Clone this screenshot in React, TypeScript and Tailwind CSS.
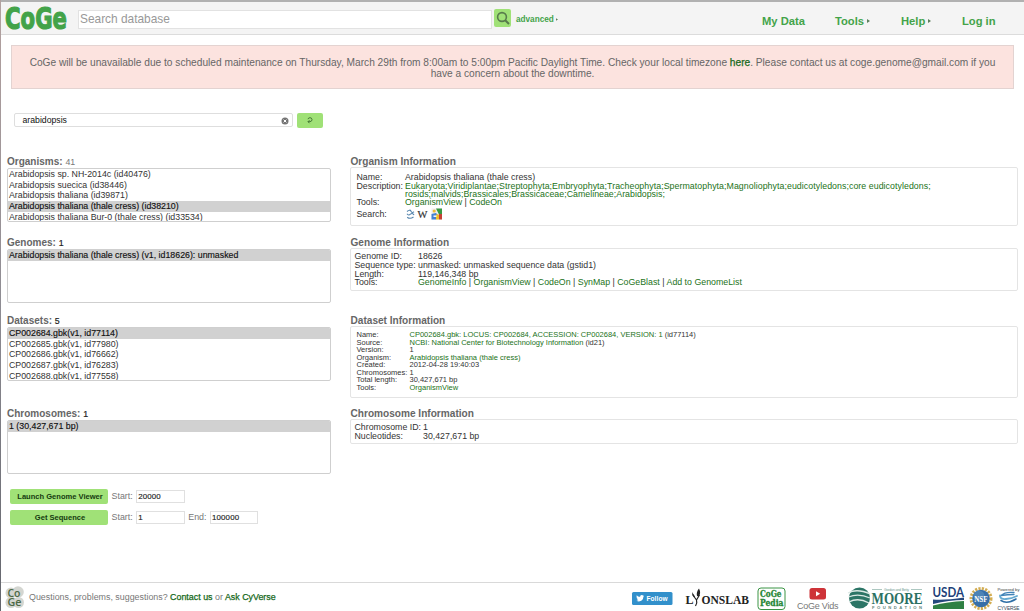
import React, { FC, ReactNode } from "react";

const SELECT_BOX =
  "h-[54px] w-[324px] overflow-hidden rounded-[2px] border border-[#cfcfcf] bg-white text-[8.8px] leading-[10.7px] text-[#333]";

const A: FC<{ children: ReactNode; strong?: boolean }> = ({ children, strong }) => (
  <a href="#" className={strong ? "text-[#16691a] [-webkit-text-stroke:0.25px]" : "text-[#1b7220]"}>
    {children}
  </a>
);

const SelectList: FC<{ label: string; count: string; items: string[]; selected: number; muted?: boolean }> = ({
  label,
  count,
  items,
  selected,
  muted,
}) => (
  <div className="w-[343px] shrink-0">
    <h3 className="h-3 text-[10px] leading-3 font-bold text-[#666]">
      {label}:{" "}
      <span className={muted ? "text-[8.8px] font-normal text-[#777]" : "text-[8.8px] font-normal text-[#222] [-webkit-text-stroke:0.2px]"}>
        {count}
      </span>
    </h3>
    <ul className={SELECT_BOX}>
      {items.map((item, i) => (
        <li
          key={item}
          className={
            i === selected ? "bg-[#d1d1d1] pl-px text-[#111] [-webkit-text-stroke:0.15px]" : "pl-px"
          }
        >
          {item}
        </li>
      ))}
    </ul>
  </div>
);

const InfoPanel: FC<{ title: string; box: string; children: ReactNode }> = ({ title, box, children }) => (
  <div className="flex-1">
    <h3 className="h-3 pl-[0.5px] text-[10.1px] leading-3 font-bold text-[#666]">{title}</h3>
    <div className={`rounded-[2px] border border-[#e4e4e4] text-[#333] ${box}`}>{children}</div>
  </div>
);

const Row: FC<{ name: string; width: string; children: ReactNode }> = ({ name, width, children }) => (
  <div className="flex whitespace-nowrap">
    <div className={`shrink-0 ${width}`}>{name}:</div>
    <div>{children}</div>
  </div>
);

const Arrow: FC<{ className: string }> = ({ className }) => (
  <svg viewBox="0 0 3 4" className={className}>
    <path d="M0 0L3 2L0 4z" fill="#5d805d" />
  </svg>
);

const lineage1 =
  "Eukaryota;Viridiplantae;Streptophyta;Embryophyta;Tracheophyta;Spermatophyta;Magnoliophyta;eudicotyledons;core eudicotyledons;";
const lineage2 = "rosids;malvids;Brassicales;Brassicaceae;Camelineae;Arabidopsis;";

const Header = () => (
  <header className="flex h-[35px] items-start border-t-2 border-b border-t-[#b1b1b1] border-b-[#dcdcdc] bg-[#f4f4f4]">
    <svg width="78" height="32" viewBox="0 2 78 32" className="shrink-0 overflow-visible">
      <text
        x="5"
        y="28.5"
        fontFamily="DejaVu Sans, sans-serif"
        fontWeight="700"
        fontSize="31"
        textLength="62"
        lengthAdjust="spacingAndGlyphs"
        fill="#43a349"
        stroke="#43a349"
        strokeWidth="1.2"
      >
        CoGe
      </text>
    </svg>
    <div className="mt-2 flex h-[19px] w-[414px] items-center border border-[#e2e2e2] bg-white pl-px text-[11.9px] text-[#999]">
      Search database
    </div>
    <div className="mt-[7px] ml-[2px] flex h-[18px] w-[17px] items-center justify-center rounded-[2px] bg-[#a0e177]">
      <svg width="14" height="14" viewBox="0 0 14 14" fill="none" stroke="#587b4c">
        <circle cx="6" cy="6" r="4.4" strokeWidth="1.6" />
        <path d="M9.2 9.2L13 13" strokeWidth="2" />
      </svg>
    </div>
    <div className="mt-3 ml-[5px] flex items-center text-[8.2px] leading-[11px] font-bold text-[#43a349]">
      advanced
      <Arrow className="ml-[2px] h-[3px] w-[2px]" />
    </div>
    <nav className="mt-3 mr-7 ml-auto flex text-[11.2px] leading-[14px] font-bold text-[#43a349]">
      <span className="w-[73px]">My Data</span>
      <span className="flex w-[66px] items-center">
        Tools
        <Arrow className="ml-[3px] h-1 w-[3px]" />
      </span>
      <span className="flex w-[61px] items-center">
        Help
        <Arrow className="ml-[3px] h-1 w-[3px]" />
      </span>
      <span className="w-[34px] whitespace-nowrap">Log in</span>
    </nav>
  </header>
);

const SearchIcons = () => (
  <svg width="38" height="13" viewBox="0 0 38 13" className="mt-px">
    <g fill="none" stroke="#5585ad" strokeWidth="1.1">
      <path d="M2 3.5Q5 1 6 3.2T9 3.8" />
      <path d="M2 5.8Q3.5 8 5.4 6.2T9 7" />
      <path d="M2.2 9.2Q5 11.5 8.5 9" />
    </g>
    <text x="12.5" y="10.3" fontFamily="Liberation Serif, serif" fontSize="10.5" fill="#333" stroke="#333" strokeWidth=".2">
      W
    </text>
    <rect x="26.5" y="0.5" width="10.5" height="11" fill="#eee" />
    <path d="M31 .5h6v6h-3z" fill="#389a42" />
    <path d="M26.500 6l4.500-1 3 3-3 3.500h-4.500z" fill="#4581d1" />
    <path d="M31 6.500h3v5h-3z" fill="#f1bd27" />
    <path d="M34 6h3v5.500h-3z" fill="#c64035" />
    <circle cx="29.200" cy="3" r="1.600" fill="#edbc37" />
    <path d="M28.500 7.500h3v1.400h-3z" fill="#fff" />
  </svg>
);

const GreenButton: FC<{ children: ReactNode }> = ({ children }) => (
  <button className="h-[15px] w-[98px] rounded-[2px] bg-[#a0e177] pl-[2px] text-[7.55px] leading-[15px] font-bold whitespace-nowrap text-[#153a10]">
    {children}
  </button>
);

const Field: FC<{ label: string; value: string; gap: string }> = ({ label, value, gap }) => (
  <div className={`flex items-center text-[8.9px] text-[#777] ${gap}`}>
    {label}:
    <span className="ml-[3.5px] flex h-[13px] w-[48.5px] items-center border border-[#e0e0e0] pl-px text-[7.9px] tracking-[0.15px] text-[#222] [-webkit-text-stroke:0.15px]">
      {value}
    </span>
  </div>
);

const Footer = () => (
  <footer className="flex h-[29px] items-start border-t border-[#d9d9d9] bg-white">
    <svg width="29" height="28" viewBox="0 583 29 28" className="shrink-0">
      <g fill="#d4d6d1">
        <circle cx="11" cy="593" r="5.5" />
        <circle cx="18" cy="592" r="5.8" />
        <circle cx="11" cy="602.5" r="5.5" />
        <circle cx="18.5" cy="602.5" r="5.5" />
      </g>
      <g fontFamily="Open Sans, sans-serif" fontWeight="600" fontSize="10" fill="#4c6946">
        <text x="7.5" y="596.5" textLength="13" lengthAdjust="spacingAndGlyphs">Co</text>
        <text x="7.5" y="606.2" textLength="14" lengthAdjust="spacingAndGlyphs">Ge</text>
      </g>
    </svg>
    <p className="mt-2 text-[8.9px] leading-[12px] whitespace-nowrap text-[#777]">
      Questions, problems, suggestions? <A strong>Contact us</A> or <A strong>Ask CyVerse</A>
    </p>
    <svg width="396" height="28" viewBox="628 583 396 28" className="ml-auto shrink-0">
      {/* twitter follow */}
      <rect x="632" y="592" width="40.500" height="13" rx="1.500" fill="#3290cb" />
      <path
        d="M636.500 600.800c3 1.800 7-.3 6.800-4l.8-.9-1 .1.700-.9-1 .4c-1-1.100-2.900-.3-2.600 1.300-1.500 0-2.500-.7-3.400-1.600-.5.900-.3 1.700.4 2.200l-.7-.2c0 .9.600 1.500 1.300 1.700h-.7c.2.700.8 1 1.500 1.100-.6.500-1.300.8-2.100.8z"
        fill="#fff"
      />
      <text x="646.500" y="601" fontFamily="Liberation Sans, sans-serif" fontWeight="700" fontSize="6.500" textLength="21" fill="#fff">
        Follow
      </text>
      {/* lyons lab */}
      <g fontFamily="Liberation Serif, serif" fontWeight="700" fontSize="12" fill="#222">
        <text x="685.500" y="604">L</text>
        <text x="701.500" y="604" textLength="47.500" lengthAdjust="spacingAndGlyphs">ONSLAB</text>
      </g>
      <path d="M692.500 594.500l4 5.500 3-5M696.500 600q1 3-1 6" fill="none" stroke="#222" strokeWidth="1.200" />
      <path d="M697 596q-1-4 2-7.500 2.500 5-.5 8zM692 592l3 4.500-1 .7q-2-2-2-5.200z" fill="#222" />
      {/* CoGePedia */}
      <rect x="758" y="588" width="27" height="21.500" rx="3" fill="#fff" stroke="#3a9444" />
      <g fontFamily="DejaVu Serif, serif" fontWeight="700" fontSize="9" fill="#268635" stroke="#268635" strokeWidth=".3">
        <text x="760" y="597" textLength="21.500" lengthAdjust="spacingAndGlyphs">CoGe</text>
        <text x="760" y="606" textLength="23.500" lengthAdjust="spacingAndGlyphs">Pedia</text>
      </g>
      {/* videos */}
      <rect x="809.500" y="588" width="16.500" height="11.500" rx="2.500" fill="#ce3338" />
      <path d="M816 591.200v5l4.200-2.500z" fill="#fff" />
      <text x="797" y="608.800" fontFamily="Liberation Sans, sans-serif" fontSize="9" textLength="41.500" fill="#777">
        CoGe Vids
      </text>
      {/* Moore foundation */}
      <circle cx="859.500" cy="598" r="10.500" fill="#2c7566" />
      <path d="M848 593q9-5 22 1M848.500 597q10-4 21.500 1M849 602q9-5 20 1" fill="none" stroke="#dceae5" strokeWidth="1.300" />
      <path d="M872 589.500h10M911 589.500h11" stroke="#8ab0a6" strokeWidth=".7" />
      <text x="884" y="590.500" fontFamily="Liberation Sans, sans-serif" fontSize="3.400" textLength="25" fill="#6e9a90">
        Gordon and Betty
      </text>
      <text x="871.500" y="603.800" fontFamily="Liberation Serif, serif" fontWeight="700" fontSize="17" textLength="51" lengthAdjust="spacingAndGlyphs" fill="#2b7062">
        MOORE
      </text>
      <text x="872" y="609" fontFamily="Liberation Sans, sans-serif" fontWeight="700" fontSize="4.200" textLength="50" fill="#64877d">
        FOUNDATION
      </text>
      {/* USDA */}
      <text x="932.500" y="597.200" fontFamily="Lato, sans-serif" fontWeight="700" fontSize="13.500" textLength="31.500" lengthAdjust="spacingAndGlyphs" fill="#213f79">
        USDA
      </text>
      <path d="M933 599.500q12 1 31-2v2.500q-15 0-31 4z" fill="#24487d" />
      <path d="M933 609v-3.500q15-4 31-4.500v8z" fill="#2f8043" />
      {/* NSF */}
      <circle cx="981" cy="598.500" r="10" fill="none" stroke="#d3ad52" strokeWidth="3" strokeDasharray="2.200 1.200" />
      <circle cx="981" cy="598.500" r="8.800" fill="#376fa8" />
      <circle cx="979" cy="596" r="5.500" fill="#5a91c0" opacity=".6" />
      <text x="974.200" y="601.500" fontFamily="Liberation Serif, serif" fontWeight="700" fontSize="8" textLength="13.500" lengthAdjust="spacingAndGlyphs" fill="#fff">
        NSF
      </text>
      {/* CyVerse */}
      <text x="997.500" y="590.500" fontFamily="Liberation Sans, sans-serif" fontSize="4.200" textLength="22" fill="#444">
        Powered by
      </text>
      <g fill="none" strokeLinecap="round">
        <path d="M1014 592.500q-9-1-13 3 7-1 13-1" stroke="#4384b8" strokeWidth="1.300" />
        <path d="M1000 595.500q0 4 6 3.500t11-3" stroke="#66aad1" strokeWidth="1.800" />
        <path d="M1001 600.500q6 4 15-1.500" stroke="#2e6ea6" strokeWidth="1.600" />
      </g>
      <text x="997.500" y="609.500" fontFamily="Liberation Sans, sans-serif" fontSize="4.800" textLength="22" fill="#345">
        CYVERSE
      </text>
    </svg>
  </footer>
);

export default function App() {
  return (
    <div className="relative flex h-[611px] w-[1024px] flex-col overflow-hidden bg-white font-['Liberation_Sans',Arial,sans-serif]">
      <Header />
      <main className="flex-1">
        <div className="mt-[10px] ml-[11px] h-11 w-[1003px] border border-[#e3d3d1] bg-[#fce3df] pt-[11px] text-center text-[10.16px] leading-[11px] whitespace-nowrap text-[#666]">
          CoGe will be unavailable due to scheduled maintenance on Thursday, March 29th from 8:00am to 5:00pm Pacific
          Daylight Time. Check your local timezone <A strong>here</A>. Please contact us at coge.genome@gmail.com if you
          <br />
          have a concern about the downtime.
        </div>

        <div className="mt-6 ml-[14px] flex h-[15px] items-start gap-1">
          <div className="flex h-[14px] w-[279px] items-center justify-between rounded-[2px] border border-[#dedede] pt-px pr-[3px] pl-[7.5px] text-[8.7px] text-[#111]">
            arabidopsis
            <svg width="8" height="8" viewBox="0 0 8 8">
              <circle cx="4" cy="4" r="3.500" fill="#747474" />
              <path d="M2.600 2.600l2.800 2.800M5.400 2.600L2.600 5.400" stroke="#fff" />
            </svg>
          </div>
          <button className="flex h-[15px] w-[26px] items-center justify-center rounded-[2px] bg-[#a0e177]">
            <svg width="6" height="7" viewBox="0 0 6 7" fill="none" stroke="#3c6d30" strokeWidth=".9">
              <path d="M1 2.200Q1.200.7 3 .7T5 2.500 3 4.700H1M2.500 3.200L1 4.700l1.500 1.500" />
            </svg>
          </button>
        </div>

        <div className="mt-7 mr-[6px] ml-[7px] flex h-20">
          <SelectList
            label="Organisms"
            count="41"
            muted
            selected={3}
            items={[
              "Arabidopsis sp. NH-2014c (id40476)",
              "Arabidopsis suecica (id38446)",
              "Arabidopsis thaliana (id39871)",
              "Arabidopsis thaliana (thale cress) (id38210)",
              "Arabidopsis thaliana Bur-0 (thale cress) (id33534)",
            ]}
          />
          <InfoPanel title="Organism Information" box="-mt-px h-[59px] pt-[5px] pl-[5.5px] text-[8.8px] leading-[8.8px]">
            <Row name="Name" width="w-[48.5px]">Arabidopsis thaliana (thale cress)</Row>
            <Row name="Description" width="w-[48.5px]">
              <div className="leading-[8px]">
                <div className="tracking-[0.055px]">
                  <A>{lineage1}</A>
                </div>
                <div className="tracking-[0.02px]">
                  <A>{lineage2}</A>
                </div>
              </div>
            </Row>
            <Row name="Tools" width="w-[48.5px]">
              <A>OrganismView</A> | <A>CodeOn</A>
            </Row>
            <div className="flex">
              <div className="w-[48.5px] pt-[3px]">Search:</div>
              <SearchIcons />
            </div>
          </InfoPanel>
        </div>

        <div className="mr-[6px] ml-[7px] flex h-[79px] pt-[1px]">
          <SelectList
            label="Genomes"
            count="1"
            selected={0}
            items={["Arabidopsis thaliana (thale cress) (v1, id18626): unmasked"]}
          />
          <InfoPanel title="Genome Information" box="-mt-px h-[43px] pt-[3px] pl-[3.5px] text-[8.8px] leading-[8.8px]">
            <Row name="Genome ID" width="w-[63.5px]">18626</Row>
            <Row name="Sequence type" width="w-[63.5px]">unmasked: unmasked sequence data (gstid1)</Row>
            <Row name="Length" width="w-[63.5px]">119,146,348 bp</Row>
            <Row name="Tools" width="w-[63.5px]">
              <A>GenomeInfo</A> | <A>OrganismView</A> | <A>CodeOn</A> | <A>SynMap</A> | <A>CoGeBlast</A> |{" "}
              <A>Add to GenomeList</A>
            </Row>
          </InfoPanel>
        </div>

        <div className="mr-[6px] ml-[7px] flex h-[93px]">
          <SelectList
            label="Datasets"
            count="5"
            selected={0}
            items={[
              "CP002684.gbk(v1, id77114)",
              "CP002685.gbk(v1, id77980)",
              "CP002686.gbk(v1, id76662)",
              "CP002687.gbk(v1, id76283)",
              "CP002688.gbk(v1, id77558)",
            ]}
          />
          <InfoPanel title="Dataset Information" box="-mt-px h-[72px] pt-[4px] pl-[5.5px] text-[7.5px] leading-[7.57px]">
            <Row name="Name" width="w-[53px]">
              <A>CP002684.gbk: LOCUS: CP002684, ACCESSION: CP002684, VERSION: 1</A> (id77114)
            </Row>
            <Row name="Source" width="w-[53px]">
              <A>NCBI: National Center for Biotechnology Information</A> (id21)
            </Row>
            <Row name="Version" width="w-[53px]">1</Row>
            <Row name="Organism" width="w-[53px]">
              <A>Arabidopsis thaliana (thale cress)</A>
            </Row>
            <Row name="Created" width="w-[53px]">2012-04-28 19:40:03</Row>
            <Row name="Chromosomes" width="w-[53px]">1</Row>
            <Row name="Total length" width="w-[53px]">30,427,671 bp</Row>
            <Row name="Tools" width="w-[53px]">
              <A>OrganismView</A>
            </Row>
          </InfoPanel>
        </div>

        <div className="mr-[6px] ml-[7px] flex h-[66px]">
          <SelectList label="Chromosomes" count="1" selected={0} items={["1 (30,427,671 bp)"]} />
          <InfoPanel title="Chromosome Information" box="-mt-px h-[25px] pt-[3px] pl-[3.5px] text-[8.8px] leading-[8.8px]">
            <Row name="Chromosome ID" width="w-[68.5px]">1</Row>
            <Row name="Nucleotides" width="w-[68.5px]">30,427,671 bp</Row>
          </InfoPanel>
        </div>

        <div className="mt-[15px] ml-[10px] flex flex-col gap-[6px]">
          <div className="flex">
            <GreenButton>Launch Genome Viewer</GreenButton>
            <Field label="Start" value="20000" gap="ml-[3.5px]" />
          </div>
          <div className="flex">
            <GreenButton>Get Sequence</GreenButton>
            <Field label="Start" value="1" gap="ml-[3.5px]" />
            <Field label="End" value="100000" gap="ml-[3.5px]" />
          </div>
        </div>
      </main>
      <Footer />
      <div className="absolute top-0 left-0 h-full w-px bg-linear-to-b from-[#b3a19f] via-[#8e8c93] to-[#63656c]" />
    </div>
  );
}
